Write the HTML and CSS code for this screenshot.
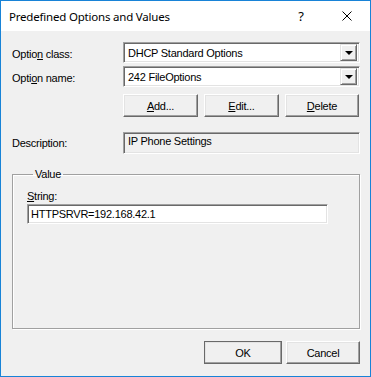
FILE: index.html
```html
<!DOCTYPE html>
<html lang="en">
<head>
  <meta charset="UTF-8" />
  <title>Predefined Options and Values</title>
  <link rel="stylesheet" href="styles.css">
</head>
<body>

  <div class="window">

    <!-- Title bar -->
    <div class="titlebar">
      <span class="title">Predefined Options and Values</span>
      <span class="help">?</span>
      <span class="close">
        <svg width="10" height="10" viewBox="0 0 10 10">
          <path d="M0.5 0.5 L9.5 9.5 M9.5 0.5 L0.5 9.5" stroke="#000" stroke-width="1" fill="none" />
        </svg>
      </span>
    </div>

    <!-- Dialog content -->
    <div class="dialog">
      <div class="form">
        <label class="label">Optio<u>n</u> class:</label>
        <div class="combo">
          <span class="combo-text">DHCP Standard Options</span>
          <span class="drop"><span class="arrow"></span></span>
        </div>

        <label class="label">Opti<u>o</u>n name:</label>
        <div class="combo">
          <span class="combo-text">242 FileOptions</span>
          <span class="drop"><span class="arrow"></span></span>
        </div>

        <span></span>
        <div class="button-row">
          <button class="btn"><u>A</u>dd...</button>
          <button class="btn"><u>E</u>dit...</button>
          <button class="btn btn-last"><u>D</u>elete</button>
        </div>

        <label class="label desc-label">Description:</label>
        <div class="readonly">IP Phone Settings</div>
      </div>

      <fieldset class="group">
        <legend>Value</legend>
        <div class="field-label"><u>S</u>tring:</div>
        <div class="textbox">HTTPSRVR=192.168.42.1</div>
      </fieldset>

      <div class="footer">
        <button class="btn btn-default">OK</button>
        <button class="btn btn-last">Cancel</button>
      </div>
    </div>

  </div>

</body>
</html>
```

FILE: styles.css
```css
/* General */
body {
  margin: 0;
  padding: 0;
  background: #ffffff;
  font-family: "Liberation Sans", Arial, sans-serif;
  font-size: 11px;
  letter-spacing: -0.25px;
  color: #000;
}

u {
  text-decoration: underline;
  text-underline-offset: 1px;
}

.window {
  width: 371px;
  height: 377px;
  box-sizing: border-box;
  border: 1px solid #1883d7;
  display: flex;
  flex-direction: column;
}

/* Title bar */
.titlebar {
  height: 30px;
  background: #ffffff;
  display: flex;
  align-items: center;
  padding-left: 8px;
}

.title {
  font-family: "Noto Sans", sans-serif;
  font-size: 11.5px;
  letter-spacing: -0.2px;
  flex-grow: 1;
}

.help {
  font-family: "Noto Sans", sans-serif;
  font-size: 13px;
  width: 46px;
  padding-left: 4px;
  text-align: center;
}

.close {
  width: 46px;
  display: flex;
  justify-content: center;
}

/* Dialog body */
.dialog {
  flex: 1;
  background: #f0f0f0;
  padding: 11px 10px 12px 11px;
  display: flex;
  flex-direction: column;
}

.form {
  display: grid;
  grid-template-columns: 111px 1fr;
  align-items: center;
}

.label {
  line-height: 13px;
}

/* Sunken fields */
.combo,
.readonly,
.textbox {
  box-sizing: border-box;
  border: 1px solid;
  border-color: #a0a0a0 #ffffff #ffffff #a0a0a0;
  box-shadow: inset 1px 1px 0 #696969, inset -1px -1px 0 #e3e3e3;
}

.combo {
  height: 21px;
  background: #ffffff;
  display: flex;
  align-items: center;
  padding: 2px;
  margin-bottom: 3px;
}

.combo-text {
  flex-grow: 1;
  padding-left: 2px;
}

.drop {
  width: 17px;
  height: 17px;
  box-sizing: border-box;
  background: #f0f0f0;
  border: 1px solid;
  border-color: #e3e3e3 #696969 #696969 #e3e3e3;
  box-shadow: inset 1px 1px 0 #ffffff, inset -1px -1px 0 #a0a0a0;
  display: flex;
  align-items: center;
  justify-content: center;
}

.arrow {
  width: 0;
  height: 0;
  border-left: 4px solid transparent;
  border-right: 4px solid transparent;
  border-top: 4px solid #000;
  margin-top: 1px;
}

/* Buttons */
.button-row {
  display: flex;
  gap: 6px;
  margin-top: 4px;
  margin-bottom: 15px;
}

.btn {
  width: 75px;
  height: 23px;
  padding: 0;
  font-family: "Liberation Sans", Arial, sans-serif;
  font-size: 11px;
  letter-spacing: -0.25px;
  color: #000;
  background: #f0f0f0;
  border: 1px solid;
  border-color: #ffffff #696969 #696969 #ffffff;
  box-shadow: inset -1px -1px 0 #a0a0a0, inset 1px 1px 0 #e3e3e3;
}

.btn-last {
  width: 74px;
}

.btn-default {
  width: 78px;
  outline: 1px solid #696969;
  outline-offset: -1px;
}

/* Description */
.desc-label {
  align-self: start;
  padding-top: 5px;
}

.readonly {
  height: 22px;
  background: #f0f0f0;
  padding: 2px 4px;
}

/* Value group */
.group {
  flex: 1;
  margin: 14px 0 12px 0;
  padding: 9px 14px 0 14px;
  border: 1px solid #a0a0a0;
  box-shadow: 1px 1px 0 #ffffff, inset 1px 1px 0 #ffffff;
}

.group legend {
  padding: 0 2px;
  margin-left: 6px;
  line-height: 13px;
}

.field-label {
  line-height: 13px;
  margin-bottom: 1px;
}

.textbox {
  width: 301px;
  height: 20px;
  background: #ffffff;
  padding: 3px 3px;
  line-height: 13px;
}

/* Footer */
.footer {
  display: flex;
  justify-content: flex-end;
  gap: 4px;
}
```
